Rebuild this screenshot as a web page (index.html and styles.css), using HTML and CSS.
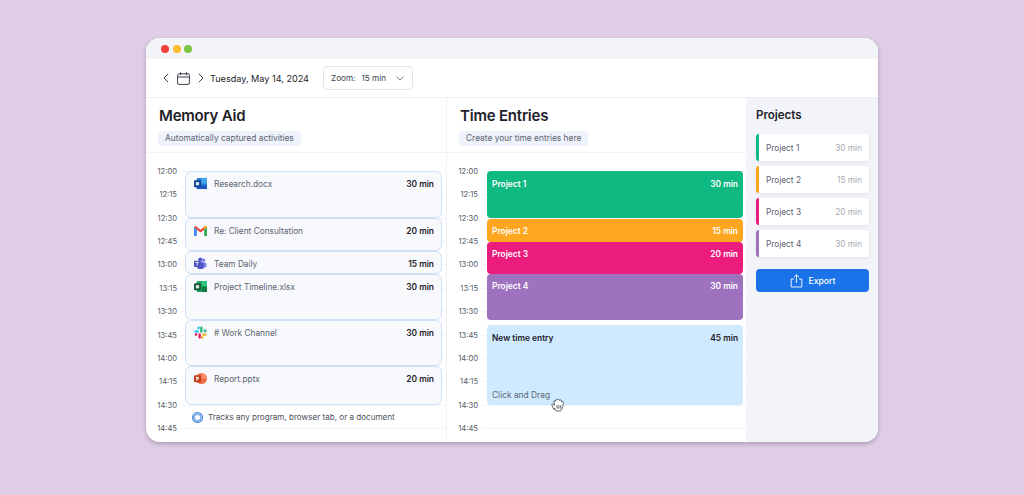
FILE: index.html
```html
<!DOCTYPE html>
<html lang="en">

<head>
    <meta charset="UTF-8" />
    <title>Time Entries</title>
    <link rel="stylesheet" href="styles.css">
</head>

<body>
    <div class="window">
        <div class="titlebar">
            <span class="dot dot-red"></span>
            <span class="dot dot-yellow"></span>
            <span class="dot dot-green"></span>
        </div>

        <div class="toolbar">
            <svg class="chevron" width="6" height="10" viewBox="0 0 6 10"><path d="M5.2.8 1 5l4.2 4.2" /></svg>
            <svg class="calendar" width="13" height="13" viewBox="0 0 13 13">
                <rect x=".6" y="1.8" width="11.8" height="10.6" rx="1.4" />
                <path d="M.6 5h11.8M3.6.2v3M9.4.2v3" />
            </svg>
            <svg class="chevron" width="6" height="10" viewBox="0 0 6 10"><path d="M.8.8 5 5 .8 9.2" /></svg>
            <span class="date">Tuesday, May 14, 2024</span>
            <div class="zoom-select">
                <span>Zoom:</span>
                <span class="zoom-value">15 min</span>
                <svg class="zoom-arrow" width="8" height="5" viewBox="0 0 8 5"><path d="M.5.6 4 4.1 7.5.6" /></svg>
            </div>
        </div>

        <div class="columns">
            <section class="column memory">
                <div class="column-head">
                    <h2>Memory Aid</h2>
                    <span class="tag">Automatically captured activities</span>
                </div>
                <div class="timeline">
                    <div class="times">
                        <div class="time"><span>12:00</span></div>
                        <div class="time"><span>12:15</span></div>
                        <div class="time"><span>12:30</span></div>
                        <div class="time"><span>12:45</span></div>
                        <div class="time"><span>13:00</span></div>
                        <div class="time"><span>13:15</span></div>
                        <div class="time"><span>13:30</span></div>
                        <div class="time"><span>13:45</span></div>
                        <div class="time"><span>14:00</span></div>
                        <div class="time"><span>14:15</span></div>
                        <div class="time"><span>14:30</span></div>
                        <div class="time"><span>14:45</span></div>
                    </div>
                    <div class="entries">
                        <div class="activity h47">
                            <svg class="app-icon" viewBox="0 0 14 14">
                                <rect x="3" y="1" width="11" height="12" rx="1" fill="#2b7cd3" />
                                <rect x="8" y="1" width="6" height="6" fill="#41a5ee" />
                                <rect x="3" y="9" width="11" height="4" fill="#185abd" />
                                <rect x="0" y="3.5" width="7.5" height="7.5" rx="1" fill="#103f91" />
                                <rect x="2" y="5.5" width="3.5" height="3.5" fill="#dbe7f6" />
                            </svg>
                            <span class="activity-name">Research.docx</span>
                            <b>30 min</b>
                        </div>
                        <div class="activity h33">
                            <svg class="app-icon" viewBox="0 0 14 14">
                                <path d="M0 3.8 1.5 2 7 6.3 12.5 2 14 3.8 7 9.2z" fill="#ea4335" />
                                <path d="M0 3.5V13h3V5.8z" fill="#4285f4" />
                                <path d="M11 5.8V13h3V3.5z" fill="#34a853" />
                                <path d="M11 5.8 14 3.5V2.6L12.5 2 11 3.2z" fill="#fbbc04" />
                            </svg>
                            <span class="activity-name">Re: Client Consultation</span>
                            <b>20 min</b>
                        </div>
                        <div class="activity h23">
                            <svg class="app-icon" viewBox="0 0 14 14">
                                <circle cx="10.5" cy="3.4" r="1.7" fill="#7b83eb" />
                                <rect x="8.5" y="5.8" width="5" height="5.6" rx="1.8" fill="#7b83eb" />
                                <circle cx="6.8" cy="2.8" r="2.2" fill="#5059c9" />
                                <rect x="3.5" y="5" width="7" height="8" rx="2" fill="#5059c9" />
                                <rect x="0" y="4" width="6.8" height="6.8" rx="1" fill="#4b53bc" />
                                <path d="M1.5 5.8h3.8M3.4 5.8v3.6" stroke="#fff" stroke-width=".9" />
                            </svg>
                            <span class="activity-name">Team Daily</span>
                            <b>15 min</b>
                        </div>
                        <div class="activity h46">
                            <svg class="app-icon" viewBox="0 0 14 14">
                                <rect x="3" y="1" width="11" height="12" rx="1" fill="#21a366" />
                                <rect x="8.5" y="1" width="5.5" height="6" fill="#33c481" />
                                <rect x="8.5" y="7" width="5.5" height="6" fill="#107c41" />
                                <rect x="0" y="3.5" width="7.5" height="7.5" rx="1" fill="#185c37" />
                                <rect x="2" y="5.5" width="3.5" height="3.5" fill="#d5e8dc" />
                            </svg>
                            <span class="activity-name">Project Timeline.xlsx</span>
                            <b>30 min</b>
                        </div>
                        <div class="activity h46">
                            <svg class="app-icon" viewBox="0 0 14 14">
                                <path d="M5 .5a1.4 1.4 0 0 1 0 2.9H3.6V2A1.4 1.4 0 0 1 5 .5z" fill="#36c5f0" />
                                <rect x=".5" y="4.6" width="4.8" height="2.6" rx="1.3" fill="#36c5f0" />
                                <rect x="6.6" y=".5" width="2.6" height="6.7" rx="1.3" fill="#2eb67d" />
                                <path d="M10.5 3.8h1.6a1.4 1.4 0 1 1 0 3h-1.6z" fill="#2eb67d" />
                                <rect x="8.7" y="8" width="5" height="2.6" rx="1.3" fill="#ecb22e" />
                                <path d="M8.7 11h1.5v1.4a1.4 1.4 0 1 1-1.5-1.4z" fill="#ecb22e" />
                                <rect x="4.8" y="7.8" width="2.6" height="5.7" rx="1.3" fill="#e01e5a" />
                                <path d="M3.5 7.8v1.5a1.4 1.4 0 1 1-1.4-1.5z" fill="#e01e5a" />
                            </svg>
                            <span class="activity-name"># Work Channel</span>
                            <b>30 min</b>
                        </div>
                        <div class="activity h39">
                            <svg class="app-icon" viewBox="0 0 14 14">
                                <circle cx="8" cy="7" r="6" fill="#ed6c47" />
                                <path d="M8 1a6 6 0 0 1 6 6H8z" fill="#ff8f6b" />
                                <rect x="0" y="3.5" width="7.5" height="7.5" rx="1" fill="#c43e1c" />
                                <rect x="2.4" y="5.2" width="2.8" height="2.8" fill="#f6dcd3" />
                                <rect x="2.4" y="5.2" width="1" height="4.4" fill="#f6dcd3" />
                            </svg>
                            <span class="activity-name">Report.pptx</span>
                            <b>20 min</b>
                        </div>
                        <div class="hint">
                            <span class="hint-icon"></span>
                            Tracks any program, browser tab, or a document
                        </div>
                    </div>
                </div>
            </section>

            <section class="column entries-col">
                <div class="column-head">
                    <h2>Time Entries</h2>
                    <span class="tag">Create your time entries here</span>
                </div>
                <div class="timeline">
                    <div class="times">
                        <div class="time"><span>12:00</span></div>
                        <div class="time"><span>12:15</span></div>
                        <div class="time"><span>12:30</span></div>
                        <div class="time"><span>12:45</span></div>
                        <div class="time"><span>13:00</span></div>
                        <div class="time"><span>13:15</span></div>
                        <div class="time"><span>13:30</span></div>
                        <div class="time"><span>13:45</span></div>
                        <div class="time"><span>14:00</span></div>
                        <div class="time"><span>14:15</span></div>
                        <div class="time"><span>14:30</span></div>
                        <div class="time"><span>14:45</span></div>
                    </div>
                    <div class="entries">
                        <div class="entry project-1 e47"><span>Project 1</span><span>30 min</span></div>
                        <div class="entry project-2 e23"><span>Project 2</span><span>15 min</span></div>
                        <div class="entry project-3 e32"><span>Project 3</span><span>20 min</span></div>
                        <div class="entry project-4 e46"><span>Project 4</span><span>30 min</span></div>
                        <div class="entry new-entry">
                            <div class="new-entry-top"><span>New time entry</span><span>45 min</span></div>
                            <div class="new-entry-hint">Click and Drag</div>
                            <svg class="hand" width="16" height="16" viewBox="0 0 16 16">
                                <path d="M3.2 12.6C2.4 11.2 1.4 9.6.9 8.2c-.4-1 .9-1.6 1.6-.8l.9 1L3 4.6c-.1-1.1 1.3-1.4 1.6-.3l.3-1.3c.3-1 1.6-.9 1.8.1.4-1 1.8-.8 1.9.3.5-.9 1.9-.5 1.8.6l.1.9c.6-.8 2-.4 1.9.7-.1 1.5-.3 3-.6 4.3-.3 1.2-1 2-1.7 2.9-.2.6-.3.9-.5 1.2H5.2c-.5-1.1-1.2-2-2-3z" />
                                <path d="M6.1 8.2v3.4M7.9 8.2v3.4M9.7 8.2v3.4" />
                            </svg>
                        </div>
                    </div>
                </div>
            </section>

            <aside class="projects">
                <h3>Projects</h3>
                <div class="project-list">
                    <div class="project-card bar-1"><span>Project 1</span><span class="project-time">30 min</span></div>
                    <div class="project-card bar-2"><span>Project 2</span><span class="project-time">15 min</span></div>
                    <div class="project-card bar-3"><span>Project 3</span><span class="project-time">20 min</span></div>
                    <div class="project-card bar-4"><span>Project 4</span><span class="project-time">30 min</span></div>
                </div>
                <button class="export-btn">
                    <svg width="13" height="14" viewBox="0 0 13 14">
                        <path d="M4 5H1.2v8h10.6V5H9M6.5 9V1M4 3.2 6.5.8 9 3.2" />
                    </svg>
                    Export
                </button>
            </aside>
        </div>
    </div>
</body>

</html>
```

FILE: styles.css
```css
body {
    font-family: Inter, 'Noto Sans', sans-serif;
    margin: 0;
    height: 495px;
    overflow: hidden;
    background-color: #decde4;
    color: #1d2129;
}

.window {
    width: 732px;
    height: 404px;
    margin: 38px 0 0 146px;
    background-color: #fff;
    border-radius: 14px;
    overflow: hidden;
    box-shadow: 0 2px 4px rgba(90, 60, 110, 0.35);
}

.titlebar {
    height: 21px;
    display: flex;
    align-items: center;
    gap: 3.5px;
    padding-left: 15px;
    background-color: #f3f4f8;
}

.dot {
    width: 8px;
    height: 8px;
    border-radius: 50%;
}

.dot-red { background-color: #f04138; }
.dot-yellow { background-color: #fbbd2e; }
.dot-green { background-color: #7cc544; }

.toolbar {
    height: 38px;
    display: flex;
    align-items: center;
    padding-left: 17px;
    border-bottom: 1px solid #eef0f4;
}

.toolbar svg {
    fill: none;
    stroke: #3a3f4a;
    stroke-width: 1;
}

.calendar {
    margin: 0 8px;
}

.date {
    margin-left: 6px;
    font-size: 9.1px;
    color: #1d2129;
}

.zoom-select {
    width: 90px;
    height: 24px;
    margin-left: 14px;
    padding-left: 7px;
    box-sizing: border-box;
    display: flex;
    align-items: center;
    border: 1px solid #e2e5ea;
    border-radius: 4px;
    font-size: 8.2px;
    color: #3a3f4a;
}

.zoom-value {
    margin-left: 6px;
}

.toolbar .zoom-arrow {
    margin-left: 10px;
    stroke: #777d88;
}

.columns {
    display: flex;
    height: 345px;
}

.column {
    flex: none;
    overflow: hidden;
}

.memory {
    width: 300px;
    border-right: 1px solid #eef0f4;
}

.entries-col {
    width: 299px;
}

.column-head {
    height: 55px;
    box-sizing: border-box;
    padding: 9px 0 0 13px;
    border-bottom: 1px solid #f1f2f5;
}

.column-head h2 {
    margin: 0 0 6px;
    font-size: 15px;
    line-height: 18px;
    font-weight: 600;
    letter-spacing: -0.2px;
}

.tag {
    display: block;
    width: fit-content;
    height: 15px;
    line-height: 15px;
    margin-left: -1px;
    padding: 0 7px;
    font-size: 8.4px;
    color: #5c6370;
    background-color: #eef2fb;
    border-radius: 3px;
}

.timeline {
    position: relative;
    margin-top: 18px;
}

.time {
    height: 23.36px;
    box-sizing: border-box;
    border-top: 1px solid #f3f4f7;
    margin-left: 35px;
    position: relative;
}

.time span {
    position: absolute;
    right: 100%;
    top: -6px;
    margin-right: 4px;
    font-size: 7.6px;
    line-height: 11px;
    color: #555b66;
}

.entries {
    position: absolute;
    top: 0;
    left: 39px;
    right: 4px;
}

.entries-col .entries {
    left: 40px;
    right: 3px;
}

.activity {
    box-sizing: border-box;
    display: flex;
    padding: 6px 7px 0 8px;
    font-size: 8.3px;
    line-height: 13px;
    color: #5c6370;
    background-color: #f8f9fc;
    border: 1px solid #cfe1f7;
    border-radius: 6px;
}

.h23 { height: 23px; }
.h33 { height: 33px; }
.h39 { height: 39px; }
.h46 { height: 46px; }
.h47 { height: 47px; }

.app-icon {
    width: 13px;
    height: 13px;
    flex: none;
    margin: -1px 7px 0 0;
}

.activity-name {
    flex: 1;
}

.activity b {
    font-size: 8.4px;
    font-weight: 600;
    color: #1d2129;
}

.hint {
    display: flex;
    align-items: center;
    gap: 6px;
    margin: 6px 0 0 8px;
    font-size: 8.1px;
    line-height: 13px;
    color: #4b515c;
}

.hint-icon {
    width: 5px;
    height: 5px;
    border: 2px solid #7fb1ea;
    border-radius: 50%;
    box-shadow: 0 0 0 1px #3f83d8;
}

.entry {
    box-sizing: border-box;
    display: flex;
    justify-content: space-between;
    padding: 6px 5px 0;
    font-size: 8.4px;
    line-height: 13px;
    font-weight: 600;
    color: #fff;
    border-radius: 4px;
}

.e23 { height: 23px; }
.e32 { height: 32px; }
.e46 { height: 46px; }
.e47 { height: 47px; margin-bottom: 1px; }

.project-1 { background-color: #10b981; padding-top: 7px; }
.project-2 { background-color: #ffa620; }
.project-3 { background-color: #ec1c7c; }
.project-4 { background-color: #9e72bf; }

.new-entry {
    position: relative;
    display: flex;
    flex-direction: column;
    justify-content: space-between;
    height: 80px;
    margin-top: 5px;
    padding-top: 7px;
    padding-bottom: 3px;
    color: #1d2129;
    background-color: #cfe9fe;
}

.new-entry-top {
    display: flex;
    justify-content: space-between;
}

.new-entry-hint {
    font-weight: 400;
    color: #5c6877;
}

.hand {
    position: absolute;
    left: 64px;
    top: 72px;
    fill: #fff;
    stroke: #3a3f4a;
    stroke-width: 0.8;
}

.projects {
    flex: 1;
    padding: 10px 9px 0 10px;
    background-color: #f3f4f9;
}

.projects h3 {
    margin: 0 0 12px;
    font-size: 11.5px;
    line-height: 14px;
    font-weight: 600;
}

.project-list {
    display: flex;
    flex-direction: column;
    gap: 5px;
}

.project-card {
    height: 27px;
    box-sizing: border-box;
    display: flex;
    align-items: center;
    justify-content: space-between;
    padding: 0 7px;
    font-size: 8.3px;
    color: #5c6370;
    background-color: #fff;
    border-radius: 3px;
    border-left: 3px solid;
    box-shadow: 0 1px 3px rgba(60, 70, 100, 0.1);
}

.project-time { color: #a5a9b1; }

.bar-1 { border-left-color: #10b981; }
.bar-2 { border-left-color: #ffa620; }
.bar-3 { border-left-color: #ec1c7c; }
.bar-4 { border-left-color: #9e72bf; }

.export-btn {
    width: 100%;
    height: 23px;
    margin-top: 12px;
    display: flex;
    align-items: center;
    justify-content: center;
    gap: 6px;
    font-family: inherit;
    font-size: 8.6px;
    font-weight: 500;
    color: #fff;
    background-color: #1a73e8;
    border: none;
    border-radius: 4px;
}

.export-btn svg {
    fill: none;
    stroke: #fff;
    stroke-width: 0.9;
}
```
